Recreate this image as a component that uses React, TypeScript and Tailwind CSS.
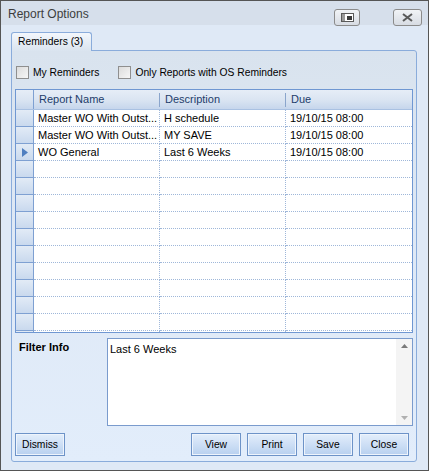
import React from 'react';

const rows = [
    { name: 'Master WO With Outst...', desc: 'H schedule', due: '19/10/15 08:00' },
    { name: 'Master WO With Outst...', desc: 'MY SAVE', due: '19/10/15 08:00' },
    { name: 'WO General', desc: 'Last 6 Weeks', due: '19/10/15 08:00', current: true },
];

const TOTAL_ROWS = 14;

function Checkbox({ label }: { label: string }) {
    return (
        <label className="flex items-center gap-[4px]">
            <span className="h-[13px] w-[13px] border border-[#8f8f8f] bg-gradient-to-br from-[#dcdcdc] to-[#f6f6f6]" />
            <span>{label}</span>
        </label>
    );
}

function Button({ label }: { label: string }) {
    return (
        <button className="h-[23px] w-[50px] border border-[#6d93c8] bg-gradient-to-b from-[#e3eefb] to-[#b8d0ef] text-[10.3px] text-black shadow-[inset_0_0_0_1px_#eef4fc]">
            {label}
        </button>
    );
}

export default function App() {
    const blank = Array.from({ length: TOTAL_ROWS - rows.length });

    return (
        <div className="flex h-[471px] w-[429px] flex-col border border-[#555] bg-[#dfe9f6] font-['Liberation_Sans',Arial,sans-serif] text-[11px] text-black">
            {/* Title bar */}
            <div className="flex h-[24px] shrink-0 items-center bg-[#d6dfeb] pl-[7px] pr-[6px]">
                <span className="pt-[2px] text-[12px] text-[#3d3d3d]">Report Options</span>
                <div className="ml-auto flex gap-[33px] pt-[8px]">
                    <div className="flex h-[17px] w-[26px] items-center justify-center rounded-[3px] border border-[#8b8b8b] bg-gradient-to-b from-[#f1f3f6] to-[#d7dce3]">
                        <svg width="13" height="9" viewBox="0 0 13 9">
                            <rect x="0.5" y="0.5" width="12" height="8" fill="#fff" stroke="#5a5a5a" />
                            <rect x="1" y="1" width="3" height="7" fill="#9a9a9a" />
                            <rect x="6" y="3" width="5" height="4" fill="#3a3a3a" />
                        </svg>
                    </div>
                    <div className="flex h-[17px] w-[29px] items-center justify-center rounded-[3px] border border-[#8b8b8b] bg-gradient-to-b from-[#f1f3f6] to-[#d7dce3]">
                        <svg width="11" height="9" viewBox="0 0 11 9">
                            <path d="M1 1 L10 8 M10 1 L1 8" stroke="#5a5a5a" strokeWidth="2" />
                        </svg>
                    </div>
                </div>
            </div>

            {/* Body */}
            <div className="flex flex-1 flex-col pl-[10px] pr-[11px] pt-[7px] pb-[8px]">
                {/* Tab strip */}
                <div className="relative z-10 flex h-[18px] shrink-0">
                    <div className="flex h-[19px] w-[81px] items-center rounded-t-[3px] border border-b-0 border-[#8aacdb] bg-gradient-to-b from-[#f3f7fc] to-[#dae4ef] pl-[6px] text-[10.3px]">
                        Reminders (3)
                    </div>
                </div>

                {/* Tab panel */}
                <div className="flex flex-1 flex-col rounded-[3px] rounded-tl-none border border-[#8aacdb] bg-gradient-to-b from-[#d9e3ee] via-[#dfe9f6] to-[#e2edfb] px-[3px]">
                    <div className="flex h-[38px] shrink-0 items-center gap-[19px] pl-[1px] pt-[5px] text-[10.3px]">
                        <Checkbox label="My Reminders" />
                        <Checkbox label="Only Reports with OS Reminders" />
                    </div>

                    {/* Grid */}
                    <div className="flex h-[244px] shrink-0 flex-col overflow-hidden border border-[#6f97d2] bg-white">
                        <div className="flex h-[20px] shrink-0 border-b border-[#a9c1e2] bg-gradient-to-b from-[#e6edf7] via-[#dbe5f2] to-[#c6d6ec] text-[#1e3d6b]">
                            <div className="w-[18px] shrink-0 border-r border-[#7ea0d2]" />
                            {['Report Name', 'Description', 'Due'].map((h, i) => (
                                <div
                                    key={h}
                                    className={
                                        'flex items-center pl-[5px] ' +
                                        (i < 2 ? 'w-[126px] shrink-0' : 'flex-1')
                                    }
                                >
                                    {i > 0 && <span className="-ml-[6px] mr-[5px] h-[14px] w-px bg-[#8aa5cc]" />}
                                    {h}
                                </div>
                            ))}
                        </div>
                        {rows.map((r, idx) => (
                            <div key={idx} className="flex h-[17px] shrink-0">
                                <div className="flex w-[18px] shrink-0 items-center justify-center border-b border-r border-[#7ea0d2] bg-gradient-to-b from-[#e2ebf6] to-[#c9d9ee]">
                                    {r.current && (
                                        <svg width="6" height="9" viewBox="0 0 6 9">
                                            <path d="M0 0 L6 4.5 L0 9 Z" fill="#4f7fc0" />
                                        </svg>
                                    )}
                                </div>
                                <div className="flex w-[126px] shrink-0 items-center border-b border-r border-dotted border-[#9fb7d9] pl-[4px]">{r.name}</div>
                                <div className="flex w-[126px] shrink-0 items-center border-b border-r border-dotted border-[#9fb7d9] pl-[4px]">{r.desc}</div>
                                <div className="flex flex-1 items-center border-b border-dotted border-[#9fb7d9] pl-[4px]">{r.due}</div>
                            </div>
                        ))}
                        {blank.map((_, idx) => (
                            <div key={'b' + idx} className="flex h-[17px] shrink-0">
                                <div className="w-[18px] shrink-0 border-b border-r border-[#7ea0d2] bg-gradient-to-b from-[#e2ebf6] to-[#c9d9ee]" />
                                <div className="w-[126px] shrink-0 border-b border-r border-dotted border-[#9fb7d9]" />
                                <div className="w-[126px] shrink-0 border-b border-r border-dotted border-[#9fb7d9]" />
                                <div className="flex-1 border-b border-dotted border-[#9fb7d9]" />
                            </div>
                        ))}
                    </div>

                    {/* Filter info */}
                    <div className="mt-[5px] flex h-[88px] shrink-0">
                        <div className="w-[92px] shrink-0 pl-[4px] pt-[1px] font-bold">Filter Info</div>
                        <div className="flex flex-1 border border-[#7a9bcd] bg-white">
                            <div className="flex-1 pl-[2px] pt-[2px]">Last 6 Weeks</div>
                            <div className="flex w-[16px] flex-col items-center justify-between bg-[#f4f4f4] py-[5px]">
                                <svg width="7" height="4" viewBox="0 0 7 4">
                                    <path d="M3.5 0 L7 4 L0 4 Z" fill="#7a7a7a" />
                                </svg>
                                <svg width="7" height="4" viewBox="0 0 7 4">
                                    <path d="M0 0 L7 0 L3.5 4 Z" fill="#b0b0b0" />
                                </svg>
                            </div>
                        </div>
                    </div>

                    {/* Buttons */}
                    <div className="mt-[7px] flex shrink-0 pr-[4px]">
                        <Button label="Dismiss" />
                        <div className="ml-auto flex gap-[6px]">
                            <Button label="View" />
                            <Button label="Print" />
                            <Button label="Save" />
                            <Button label="Close" />
                        </div>
                    </div>
                </div>
            </div>
        </div>
    );
}
